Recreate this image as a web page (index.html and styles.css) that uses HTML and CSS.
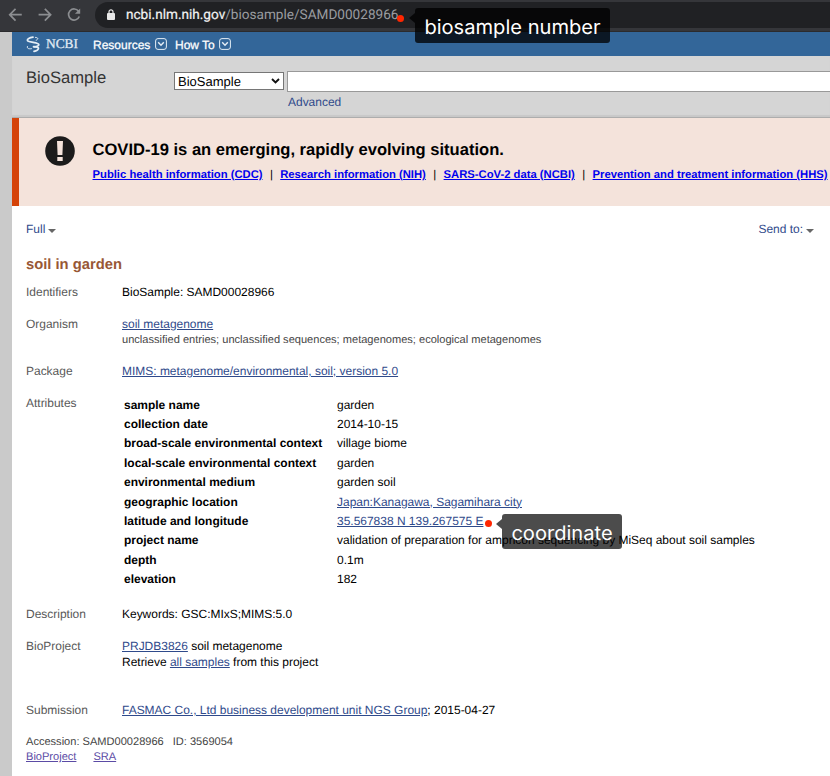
FILE: index.html
```html
<!DOCTYPE html>
<html lang="en">
<head>
<meta charset="utf-8">
<title>soil in garden - BioSample - NCBI</title>
<link rel="stylesheet" href="styles.css">
</head>
<body>
<div class="browser-bar">
  <svg class="nav-icons" width="96" height="31" viewBox="0 0 96 31" fill="none" stroke="#8c8e91" stroke-width="1.7">
    <path d="M22 14.7H10M15.7 8.8L9.8 14.7l5.9 5.9"/>
    <path d="M39 14.7h12M45.3 8.8l5.9 5.9-5.9 5.9"/>
    <path d="M79.4 11.2A5.6 5.6 0 1 0 80.1 16.5"/>
    <path d="M81 8.5v5.3h-5.3z" fill="#8c8e91" stroke="none"/>
  </svg>
  <div class="address">
    <svg class="lock" width="8" height="12" viewBox="0 0 8 12"><rect y="4" width="8" height="7" rx="1" fill="#e8e8e8"/><path d="M2 4.5V2.8a2 2 0 0 1 4 0v1.7" fill="none" stroke="#e8e8e8" stroke-width="1.2"/></svg>
    <span class="host">ncbi.nlm.nih.gov</span><span class="path">/biosample/SAMD00028966</span>
    <i class="dot"></i>
    <div class="callout number"><span>biosample number</span></div>
  </div>
</div>
<div class="page">
  <nav class="ncbi-nav">
    <svg class="helix" width="15" height="17" viewBox="0 0 15 17" fill="none" stroke="#e4edf5" stroke-linecap="round">
      <path d="M7 1.2C3.5 1.8 1 3 1.4 4.4 2 6.4 10 5.6 12.6 8.2c1.2 1.4-2 2.4-4.6 2.6" stroke-width="1.7"/>
      <path d="M7.5 10.7c3 0 5.4.6 4.9 2-.4 1.4-2.4 2.2-4.4 2.6" stroke-width="1.7"/>
      <path d="M9.5 1.4c2.6.2 3.4 1.4.6 3M1.4 10.5c-.6 2 1 2.6 4 2.2" stroke-width="1"/>
    </svg>
    <span class="brand">NCBI</span>
    <span class="menu resources">Resources</span>
    <svg class="chev" width="12" height="12" viewBox="0 0 12 12" fill="none" stroke="#e4edf5"><rect x=".6" y=".6" width="10.8" height="10.8" rx="2.4"/><path d="M3.2 4.2L6 7.2l2.8-3" stroke-width="1.4"/></svg>
    <span class="menu howto">How To</span>
    <svg class="chev" width="12" height="12" viewBox="0 0 12 12" fill="none" stroke="#e4edf5"><rect x=".6" y=".6" width="10.8" height="10.8" rx="2.4"/><path d="M3.2 4.2L6 7.2l2.8-3" stroke-width="1.4"/></svg>
  </nav>
  <header class="search">
    <div class="db-name"><span>BioSample</span></div>
    <div class="select"><span>BioSample</span><svg width="9" height="6" viewBox="0 0 9 6" fill="none" stroke="#111" stroke-width="1.9"><path d="M1 1l3.5 3.5L8 1"/></svg></div>
    <div class="query"><div class="field"></div><a class="advanced">Advanced</a></div>
  </header>
  <section class="alert">
    <svg class="bang" width="30" height="30" viewBox="0 0 30 30"><circle cx="15" cy="15" r="14.8" fill="#1b1b1b"/><path d="M12 5h6l-.6 14h-4.8zM12.3 21h5.4v4h-5.4z" fill="#f4e3db"/></svg>
    <div class="alert-body">
      <h2><span>COVID-19 is an emerging, rapidly evolving situation.</span></h2>
      <p><a>Public health information (CDC)</a><b>|</b><a>Research information (NIH)</a><b>|</b><a>SARS-CoV-2 data (NCBI)</a><b>|</b><a>Prevention and treatment information (HHS)</a></p>
    </div>
  </section>
  <main>
    <div class="tools"><span class="tool">Full<i></i></span><span class="tool">Send to:<i></i></span></div>
    <h1><span>soil in garden</span></h1>
    <dl>
      <div class="row identifiers"><dt>Identifiers</dt><dd>BioSample: SAMD00028966</dd></div>
      <div class="row organism"><dt>Organism</dt><dd><a>soil metagenome</a><small>unclassified entries; unclassified sequences; metagenomes; ecological metagenomes</small></dd></div>
      <div class="row package"><dt>Package</dt><dd><a>MIMS: metagenome/environmental, soil; version 5.0</a></dd></div>
      <div class="row attributes"><dt>Attributes</dt><dd>
        <table>
          <tr><th>sample name</th><td>garden</td></tr>
          <tr><th>collection date</th><td>2014-10-15</td></tr>
          <tr><th>broad-scale environmental context</th><td>village biome</td></tr>
          <tr><th>local-scale environmental context</th><td>garden</td></tr>
          <tr><th>environmental medium</th><td>garden soil</td></tr>
          <tr><th>geographic location</th><td><a>Japan:Kanagawa, Sagamihara city</a></td></tr>
          <tr><th>latitude and longitude</th><td><div class="anchor"><a>35.567838 N 139.267575 E</a><i class="dot"></i><div class="callout coordinate"><span>coordinate</span></div></div></td></tr>
          <tr><th>project name</th><td>validation of preparation for ampricon sequencing by MiSeq about soil samples</td></tr>
          <tr><th>depth</th><td>0.1m</td></tr>
          <tr><th>elevation</th><td>182</td></tr>
        </table></dd></div>
      <div class="row description"><dt>Description</dt><dd>Keywords: GSC:MIxS;MIMS:5.0</dd></div>
      <div class="row project"><dt>BioProject</dt><dd><a>PRJDB3826</a> soil metagenome<br>Retrieve <a>all samples</a> from this project</dd></div>
      <div class="row submission"><dt>Submission</dt><dd><a>FASMAC Co., Ltd business development unit NGS Group</a>; 2015-04-27</dd></div>
    </dl>
    <footer><div><span>Accession: SAMD00028966</span><span class="uid">ID: 3569054</span></div><div><a>BioProject</a><a class="sra">SRA</a></div></footer>
  </main>
</div>
</body>
</html>
```
FILE: styles.css
```css
* { box-sizing: border-box; }
body {
  margin: 0;
  height: 776px;
  overflow: hidden;
  background: #cacaca;
  color: #000;
  font: 11.98px/16px "Liberation Sans", Arial, sans-serif;
  text-rendering: geometricPrecision;
  white-space: nowrap;
}
h1, h2, p, dl, dd, dt { margin: 0; }

.browser-bar {
  display: flex;
  height: 32px;
  background: #35363a;
  border-bottom: 1px solid #2b2b2e;
}
.nav-icons { flex: none; width: 95px; }
.address {
  position: relative;
  display: flex;
  align-items: center;
  flex: 1;
  height: 26px;
  margin-top: 2px;
  padding-left: 12px;
  border-radius: 13px 0 0 13px;
  background: #202124;
  color: #9a9ca0;
  font: 13.6px/26px Roboto, sans-serif;
}
.lock { margin-right: 11px; }
.host { color: #f1f1f1; -webkit-text-stroke: .2px #f1f1f1; }
.dot {
  position: absolute;
  width: 7px;
  height: 7px;
  border-radius: 50%;
  background: #ff2600;
}
.address .dot { left: 302px; top: 13px; }
.callout {
  position: absolute;
  z-index: 2;
  height: 35px;
  border-radius: 3px;
  background: rgba(0, 0, 0, .76);
  color: #fff;
  font: 20.1px/38px Inter, sans-serif;
  text-align: center;
}
.callout::before {
  content: "";
  position: absolute;
  left: -6px;
  top: 5px;
  border: 5px solid transparent;
  border-right: 6px solid rgba(0, 0, 0, .76);
  border-left: 0;
}
.number { left: 320px; top: 6px; width: 195px; }

.page { height: 744px; margin-left: 12px; background: #fff; }
.ncbi-nav {
  display: flex;
  align-items: center;
  height: 24px;
  padding-left: 14px;
  background: #336699;
  color: #fff;
}
.brand {
  width: 32px;
  margin: 0 15px 0 5px;
  color: #e4edf5;
  font: 13.4px/24px "Liberation Serif", serif;
  -webkit-text-stroke: .25px #e4edf5;
}
.menu { padding-top: 1px; font-size: 12px; -webkit-text-stroke: .25px #fff; }
.resources { width: 58px; }
.howto { width: 40px; margin-left: 8px; }
.chev { margin-left: 4px; }

.search {
  display: flex;
  height: 62px;
  background: #d5d5d5;
  border-bottom: 1px solid #adadad;
  box-shadow: inset 0 -2px 1px #c8c8c8;
}
.db-name { width: 162px; padding: 12px 0 0 14px; color: #333; font-size: 16.6px; line-height: 20px; }
.select {
  display: flex;
  align-items: center;
  justify-content: space-between;
  width: 110px;
  height: 18px;
  margin-top: 16px;
  padding: 0 3px;
  border: 1px solid #767676;
  background: #fff;
  font-size: 13px;
}
.select span { padding-top: 1px; }
.query { flex: 1; margin: 15px 0 0 3px; }
.field { height: 21px; border: 1px solid #999; border-right: 0; background: #fff; }
.advanced { display: block; margin: 2px 0 0 1px; color: #2f4a8b; }

.alert {
  display: flex;
  height: 88px;
  border-left: 7px solid #d54309;
  background: #f4e3db;
}
.bang { flex: none; margin: 18px 17.5px 0 26px; }
.alert h2 { margin-top: 22px; font-size: 16.57px; line-height: 20px; }
.alert p { margin-top: 7px; font-size: 11.26px; font-weight: bold; }
.alert a { color: #0000ee; }
.alert b { margin: 0 7.4px; font-weight: normal; }
a { color: #2f4a8b; text-decoration: underline; }
a.advanced { text-decoration: none; }

main { padding: 15px 16px 0 14px; }
.tools { display: flex; justify-content: space-between; color: #2f4a8b; }
.tool i {
  display: inline-block;
  margin: 0 0 0 3px;
  border: 4px solid transparent;
  border-top: 4px solid #666;
  border-bottom: 0;
}
h1 { margin-top: 19px; color: #985735; font-size: 14.75px; line-height: 18px; }
.row { display: flex; }
dt { width: 96px; color: #585858; }
.identifiers { margin-top: 10px; height: 32px; }
.organism { height: 47px; }
.organism small { display: block; color: #444; font-size: 11.07px; }
.package { height: 32px; }
.attributes { height: 211px; }
table { margin-top: 0; border-collapse: collapse; }
tr { height: 19.4px; }
th { width: 215px; padding: 0 0 0 2px; text-align: left; }
td { padding: 0; }
.anchor { position: relative; }
.anchor .dot { left: 148px; top: 7px; }
.coordinate { left: 165px; top: 1px; width: 120px; background: rgba(0, 0, 0, .7); }
.coordinate::before { border-right-color: rgba(0, 0, 0, .7); }
.description { height: 32px; }
.project { height: 64px; }
.submission { height: 32px; }
footer { margin-top: 1px; color: #444; font-size: 11.07px; line-height: 15px; }
.uid { margin-left: 9px; }
footer a { color: #5b4ba5; }
.sra { margin-left: 17px; }
```
